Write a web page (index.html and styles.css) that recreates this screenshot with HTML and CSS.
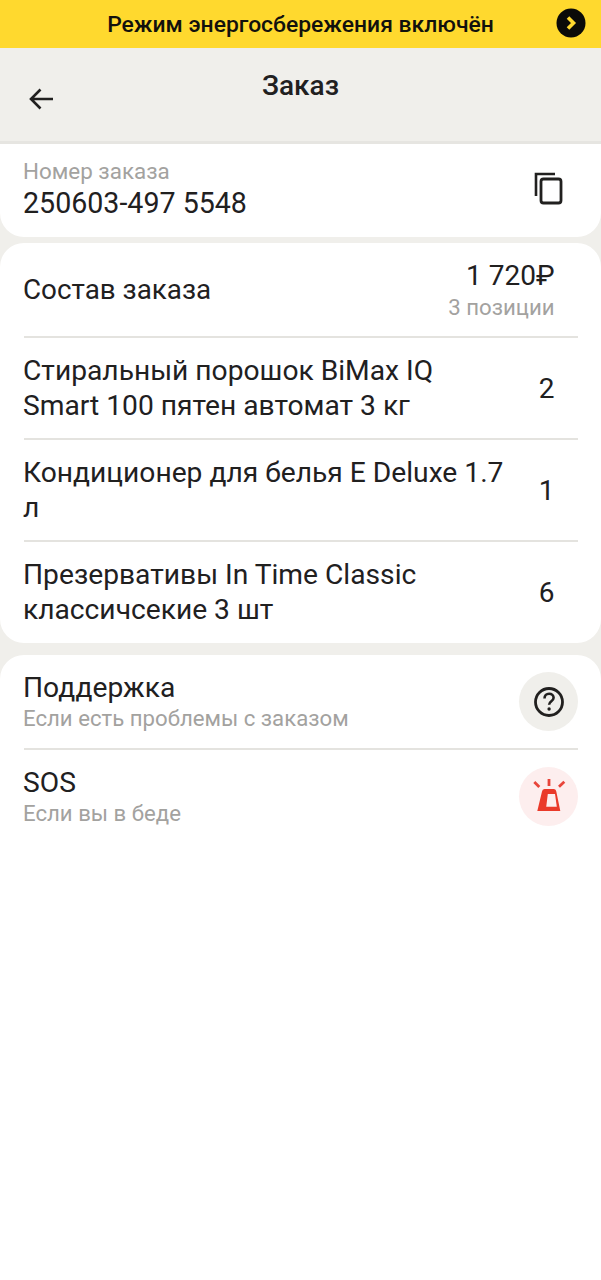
FILE: index.html
```html
<!DOCTYPE html>
<html lang="ru">
<head>
<meta charset="utf-8">
<title>Заказ</title>
<link rel="stylesheet" href="styles.css">
</head>
<body>
<div class="banner">
  <span class="banner-text">Режим энергосбережения включён</span>
  <span class="banner-go"><svg width="30" height="30" viewBox="0 0 30 30"><circle cx="15" cy="15" r="14.500" fill="#0b0b08"/><path d="M12 9.500 17.500 15 12 20.500" fill="none" stroke="#ffd92e" stroke-width="3.600"/></svg></span>
</div>
<header class="topbar">
  <svg class="back" width="28" height="28" viewBox="0 0 28 28"><path d="M26 14H4M13.500 4.500 4 14l9.500 9.500" fill="none" stroke="#21201f" stroke-width="2.600"/></svg>
  <h1 class="title">Заказ</h1>
</header>
<section class="card card-number">
  <div class="pull">
    <div class="label">Номер заказа</div>
    <div class="number">250603-497 5548</div>
  </div>
  <svg class="copy" width="30" height="34" viewBox="0 0 30 34"><path d="M3 25V3h19" fill="none" stroke="#21201f" stroke-width="2.600"/><rect x="8" y="8" width="20" height="24" rx="2.500" fill="none" stroke="#21201f" stroke-width="2.800"/></svg>
</section>
<section class="card card-items">
  <div class="row row-total">
    <div class="row-name row-head pull">Состав заказа</div>
    <div class="total">
      <div class="price">1 720₽</div>
      <div class="muted">3 позиции</div>
    </div>
  </div>
  <div class="row row-item">
    <div class="row-name pull">Стиральный порошок BiMax IQ Smart 100 пятен автомат 3 кг</div>
    <div class="qty">2</div>
  </div>
  <div class="row row-item">
    <div class="row-name pull">Кондиционер для белья E Deluxe 1.7 л</div>
    <div class="qty">1</div>
  </div>
  <div class="row row-item">
    <div class="row-name pull">Презервативы In Time Classic классичсекие 3 шт</div>
    <div class="qty">6</div>
  </div>
</section>
<section class="card card-help">
  <div class="row row-help">
    <div class="pull">
      <div class="row-name">Поддержка</div>
      <div class="muted">Если есть проблемы с заказом</div>
    </div>
    <span class="circle circle-gray"><svg width="32" height="32" viewBox="0 0 32 32"><circle cx="16" cy="16" r="13.500" fill="none" stroke="#21201f" stroke-width="2.800"/><path d="M11.500 12.500c0-3 2-4.700 4.600-4.700 2.700 0 4.500 1.700 4.500 4 0 3.500-4.500 3.500-4.500 7" fill="none" stroke="#21201f" stroke-width="2.600"/><circle cx="16.100" cy="23" r="1.700" fill="#21201f"/></svg></span>
  </div>
  <div class="row row-help">
    <div class="pull">
      <div class="row-name">SOS</div>
      <div class="muted">Если вы в беде</div>
    </div>
    <span class="circle circle-red"><svg width="36" height="40" viewBox="0 0 36 40"><path d="M18 3v7M3.300 6l5 5M33.300 5.700l-5.300 5" fill="none" stroke="#e8453a" stroke-width="2.800"/><path d="M11 15.500q.3-2.500 2.500-2.500h9.500q2 0 2.300 2.500L29.300 35H6.300z" fill="#ea3a2a"/><path d="M16.800 18H24l1.800 12.700H15.200z" fill="#fdeeee"/></svg></span>
  </div>
</section>
</body>
</html>
```
FILE: styles.css
```css
* { box-sizing: border-box; }
html, body { margin: 0; height: 100%; }
body {
  width: 601px;
  min-height: 1280px;
  background: #f0efeb;
  color: #21201f;
  font-family: Roboto, "Noto Sans", "Liberation Sans", sans-serif;
  display: flex;
  flex-direction: column;
}
.banner {
  height: 48px;
  flex: none;
  background: #ffd92e;
  display: flex;
  align-items: center;
  justify-content: center;
  position: relative;
}
.banner-text { font-size: 22.900px; font-weight: 500; color: #12110d; }
.banner-go { position: absolute; top: 8px; right: 15px; line-height: 0; }
.topbar {
  height: 96px;
  flex: none;
  border-bottom: 3px solid #e6e5e1;
  position: relative;
  display: flex;
  justify-content: center;
}
.title { margin: 20px 0 0; font-size: 28px; line-height: 36px; font-weight: 500; }
.back { position: absolute; left: 27px; top: 37px; }
.card { background: #fff; }
.pull { margin-left: -1px; }
.card-number {
  height: 93px;
  flex: none;
  border-radius: 0 0 24px 24px;
  padding: 13px 38px 0 24px;
  display: flex;
  justify-content: space-between;
  align-items: flex-start;
}
.label { font-size: 22.400px; line-height: 28px; color: #a3a29f; }
.number { font-size: 28.600px; line-height: 36px; }
.copy { margin-top: 14px; }
.card-items {
  margin-top: 6px;
  height: 400px;
  flex: none;
  border-radius: 24px;
  padding: 0 23px 0 24px;
}
.row { display: flex; justify-content: space-between; align-items: center; }
.row + .row { border-top: 2px solid #e4e3df; }
.row-name { font-size: 28.200px; line-height: 35px; }
.row-head { font-size: 27.800px; }
.row-total { height: 93px; }
.total { text-align: right; padding-right: 23.500px; }
.price { font-size: 28px; line-height: 35px; }
.muted { font-size: 22.200px; line-height: 28px; color: #a3a29f; }
.row-item { height: 102px; }
.row-item .row-name { width: 490px; }
.qty { font-size: 28px; padding-right: 23.500px; }
.card-help {
  margin-top: 12px;
  flex: 1;
  border-radius: 24px 24px 0 0;
  padding: 0 23px 0 24px;
}
.row-help { height: 94px; }
.row-help:first-child { height: 93px; }
.row-help:first-child .pull { margin-bottom: 2px; }
.row-help .row-name { line-height: 36px; }
.row-help .muted { margin-top: -2px; }
.circle {
  width: 59px;
  height: 59px;
  border-radius: 50%;
  display: flex;
  align-items: center;
  justify-content: center;
}
.circle-gray { background: #f0efeb; }
.circle-red { background: #fdeeee; }
```
